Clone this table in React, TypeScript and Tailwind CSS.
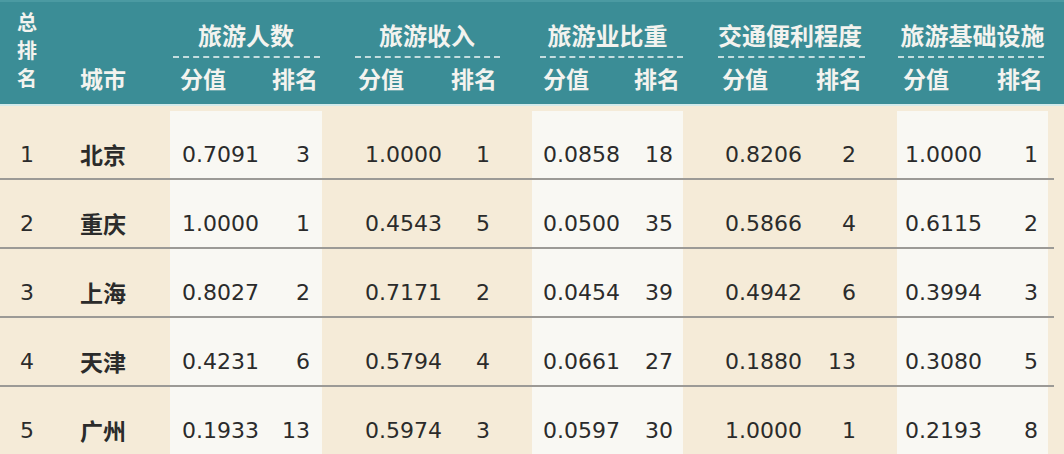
import React from "react";

type Row = {
  rank: string;
  city: string;
  values: [string, string][];
};

const ROWS: Row[] = [
  { rank: "1", city: "北京", values: [["0.7091", "3"], ["1.0000", "1"], ["0.0858", "18"], ["0.8206", "2"], ["1.0000", "1"]] },
  { rank: "2", city: "重庆", values: [["1.0000", "1"], ["0.4543", "5"], ["0.0500", "35"], ["0.5866", "4"], ["0.6115", "2"]] },
  { rank: "3", city: "上海", values: [["0.8027", "2"], ["0.7171", "2"], ["0.0454", "39"], ["0.4942", "6"], ["0.3994", "3"]] },
  { rank: "4", city: "天津", values: [["0.4231", "6"], ["0.5794", "4"], ["0.0661", "27"], ["0.1880", "13"], ["0.3080", "5"]] },
  { rank: "5", city: "广州", values: [["0.1933", "13"], ["0.5974", "3"], ["0.0597", "30"], ["1.0000", "1"], ["0.2193", "8"]] },
];

// per-group layout: background + paddings for header and body
const GROUPS = [
  { title: "旅游人数", bg: "bg-[#f9f8f3]", line: "ml-[3px] mr-[2px]", sub: "pl-[10px] pr-[4px]", body: "pl-[12px] pr-[12px]" },
  { title: "旅游收入", bg: "bg-[#f5ebd8]", line: "ml-[33px] mr-[32px]", sub: "pl-[36px] pr-[35px]", body: "pl-[43px] pr-[42px]" },
  { title: "旅游业比重", bg: "bg-[#f9f8f3]", line: "ml-[8px] mr-[0px]", sub: "pl-[11px] pr-[3px]", body: "pl-[11px] pr-[10px]" },
  { title: "交通便利程度", bg: "bg-[#f5ebd8]", line: "ml-[35px] mr-[32px]", sub: "pl-[39px] pr-[35px]", body: "pl-[42px] pr-[41px]" },
  { title: "旅游基础设施", bg: "bg-[#f9f8f3]", line: "ml-[1px] mr-[4px]", sub: "pl-[6px] pr-[5px]", body: "pl-[8px] pr-[10px]" },
];

const COLS = "grid grid-cols-[60px_110px_152px_210px_151px_214px_151px_6px]";
const cjk = "font-['Noto_Sans_CJK_SC',sans-serif]";
const num = "font-['DejaVu_Sans','Noto_Sans_CJK_SC',sans-serif]";

export default function App() {
  return (
    <div className="h-[454px] w-[1064px] overflow-hidden bg-[#f5ebd8]">
      <div className="flex border-b-2 border-[#d3eaea] border-t-2 border-t-[#4b9aa2] bg-[#3b8d96]">
        <div className={`${COLS} h-[102px] text-[#f3f3ef] font-bold ${cjk}`}>
          <div className="flex flex-col gap-[7px] pl-[17px] pt-[9px] text-[20px] leading-[21px]">
            <span>总</span>
            <span>排</span>
            <span>名</span>
          </div>
          <div className="pl-[20px] pt-[62px] text-[23px] leading-[28px]">城市</div>
          {GROUPS.map((g) => (
            <div key={g.title} className="flex flex-col pt-[18px]">
              <div className="h-[30px] text-center text-[24px] leading-[30px]">{g.title}</div>
              <div className={`mt-[6px] border-t-2 border-dashed border-[#e6f1f1]/80 ${g.line}`} />
              <div className={`mt-[6px] flex h-[28px] justify-between text-[23px] leading-[28px] ${g.sub}`}>
                <span>分值</span>
                <span>排名</span>
              </div>
            </div>
          ))}
          <div />
        </div>
        <div className="flex-1" />
      </div>

      <div className="pt-[5px]">
        {ROWS.map((r) => (
          <div key={r.rank} className="flex">
            <div className={`${COLS} h-[69px] border-b-2 border-[#9c9a96] text-[22px] text-[#2b2b2b]`}>
              <div className={`flex items-center pl-[20px] pt-[20px] ${num}`}>{r.rank}</div>
              <div className={`flex items-center pl-[20px] pt-[20px] font-bold text-[23px] ${cjk}`}>{r.city}</div>
              {r.values.map(([score, rk], i) => (
                <div key={i} className={`flex items-center justify-between pt-[20px] ${GROUPS[i].bg} ${GROUPS[i].body} ${num}`}>
                  <span>{score}</span>
                  <span>{rk}</span>
                </div>
              ))}
              <div />
            </div>
            <div className="flex-1" />
          </div>
        ))}
      </div>
    </div>
  );
}
